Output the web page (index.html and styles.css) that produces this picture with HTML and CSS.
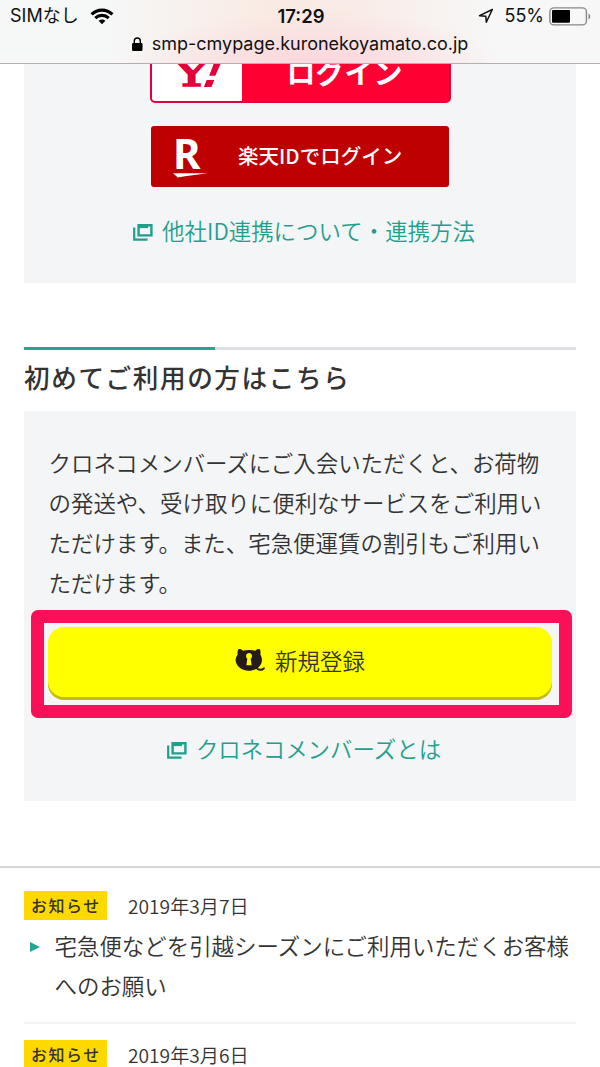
FILE: index.html
```html
<!DOCTYPE html>
<html lang="ja">
<head>
<meta charset="UTF-8">
<meta name="viewport" content="width=device-width, initial-scale=1.0">
<title>クロネコメンバーズ</title>
<link rel="stylesheet" href="styles.css">
</head>
<body>
    <!-- Status bar -->
    <header>
        <div class="status">
            <div class="carrier">
                <span>SIMなし</span>
                <svg width="24" height="17" viewBox="0 0 24 17" fill="none" stroke="#000" stroke-width="3.2">
                    <path d="M1.6 6.4C7.4.7 16.6.7 22.4 6.4"/>
                    <path d="M5.3 10.1c3.8-3.6 9.6-3.6 13.4 0"/>
                    <path d="M12 16.2l-3.4-3.4c1.9-1.7 4.9-1.7 6.8 0z" fill="#000" stroke="none"/>
                </svg>
            </div>
            <div class="clock">17:29</div>
            <div class="power">
                <svg width="16" height="16" viewBox="0 0 16 16" fill="none" stroke="#111" stroke-width="1.5" stroke-linejoin="round">
                    <path d="M14.3 1.5L1.5 7.7l6.3.5.5 6.1z"/>
                </svg>
                <span>55%</span>
                <svg class="battery" width="43" height="19" viewBox="0 0 43 19">
                    <rect x=".9" y=".9" width="36.5" height="17" rx="4" fill="none" stroke="#888" stroke-width="1.4"/>
                    <rect x="3" y="3" width="18" height="12.8" rx="1" fill="#000"/>
                    <path d="M39.5 6.5c2.3 1 2.3 5 0 6z" fill="#888"/>
                </svg>
            </div>
        </div>
        <div class="address">
            <svg width="11" height="14" viewBox="0 0 11 14">
                <rect x="0" y="6" width="10.5" height="8" rx="1.2" fill="#000"/>
                <path d="M2.3 6.5V4c0-4 6-4 6 0v2.5" fill="none" stroke="#000" stroke-width="1.4"/>
            </svg>
            <span>smp-cmypage.kuronekoyamato.co.jp</span>
        </div>
    </header>

    <main>
        <!-- Login with other IDs -->
        <section class="panel login">
            <a class="yahoo">
                <span class="yahoo-mark"><b>Y</b><i>!</i></span>
                <span class="yahoo-text">ログイン</span>
            </a>
            <a class="rakuten">
                <span class="rakuten-mark">
                    <b>R</b>
                    <svg width="36" height="6" viewBox="0 0 36 6"><path d="M0 1.2h34.5C25 3 14 3.2 4.8 5.6z" fill="#fff"/></svg>
                </span>
                <span class="rakuten-text">楽天IDでログイン</span>
            </a>
            <a class="link">
                <svg width="20" height="18" viewBox="0 0 20 18" fill="none" stroke="#1fa08d">
                    <path d="M1.2 4.5v12.2h13.300" stroke-width="2.2"/>
                    <path d="M5.6 2.2h12.8v10.2H5.6z" stroke-width="2.4"/>
                    <path d="M5 3.2h10" stroke-width="3.8"/>
                </svg>
                <span>他社ID連携について・連携方法</span>
            </a>
        </section>

        <!-- New members -->
        <h2>初めてご利用の方はこちら</h2>
        <section class="panel join">
            <p>クロネコメンバーズにご入会いただくと、お荷物の発送や、受け取りに便利なサービスをご利用いただけます。また、宅急便運賃の割引もご利用いただけます。</p>
            <div class="highlight">
                <a class="register">
                    <svg width="30" height="24" viewBox="0 0 30 23" preserveAspectRatio="none">
                        <path d="M3.3 1.3C4.4.4 6.4.9 8 2.6c4-.9 8.500-.9 12.300 0C21.900.9 23.900.5 24.900 1.300c.8 1.700.7 3.600.5 5.200 2.500 4 2.100 8.500-1.800 11.900C18 23.100 9 23 4 18.300.1 14.700-.4 10.300 2.600 6.400 2.400 4.600 2.600 2.700 3.300 1.300z" fill="#251b18"/>
                        <path d="M21.5 19c2 2.3 5.5 2.6 7.3.5" fill="none" stroke="#251b18" stroke-width="2" stroke-linecap="round"/>
                        <path d="M12.300 10.2a3 3 0 1 1 3.4 0l.9 6.3h-5.2z" fill="#ff0"/>
                    </svg>
                    <span>新規登録</span>
                </a>
            </div>
            <a class="link">
                <svg width="20" height="18" viewBox="0 0 20 18" fill="none" stroke="#1fa08d">
                    <path d="M1.2 4.5v12.2h13.300" stroke-width="2.2"/>
                    <path d="M5.6 2.2h12.8v10.2H5.6z" stroke-width="2.4"/>
                    <path d="M5 3.2h10" stroke-width="3.8"/>
                </svg>
                <span>クロネコメンバーズとは</span>
            </a>
        </section>

        <!-- News -->
        <ul class="news">
            <li>
                <div class="meta"><span class="tag">お知らせ</span><time>2019年3月7日</time></div>
                <a class="title">宅急便などを引越シーズンにご利用いただくお客様へのお願い</a>
            </li>
            <li>
                <div class="meta"><span class="tag">お知らせ</span><time>2019年3月6日</time></div>
            </li>
        </ul>
    </main>
</body>
</html>
```
FILE: styles.css
```css
* {
    box-sizing: border-box;
}

body {
    margin: 0;
    height: 1067px;
    overflow: hidden;
    display: flex;
    flex-direction: column;
    background-color: #fff;
    color: #333;
    font-family: 'Noto Sans CJK JP', sans-serif;
    font-size: 22.45px;
    font-weight: 350;
    line-height: 40px;
}

header {
    flex: none;
    height: 64px;
    border-bottom: 1px solid #b5adaf;
    background: radial-gradient(ellipse 190px 60px at 315px 70px, #fad5dc, rgba(250, 213, 220, 0)), linear-gradient(90deg, #f6f7f7 18%, #f9ebe3 45%, #f9ebe6 58%, #f7f7f7 82%);
    color: #111;
    font-family: Inter, 'Noto Sans CJK JP', sans-serif;
    font-weight: 400;
}

.status {
    display: grid;
    grid-template-columns: 1fr auto 1fr;
    align-items: center;
    height: 32px;
    padding: 0 8px 0 10px;
    font-size: 18px;
    line-height: 32px;
}

.carrier, .power {
    display: flex;
    align-items: center;
}

.carrier {
    gap: 11px;
}

.clock {
    font-size: 18.5px;
    font-weight: 600;
}

.power {
    justify-content: flex-end;
    gap: 10px;
}

.battery {
    margin-left: -5px;
}

.address {
    display: flex;
    justify-content: center;
    align-items: center;
    gap: 9px;
    height: 23px;
    font-size: 18px;
}

/* Content below the browser bar */
main {
    flex: 1;
    min-height: 0;
    overflow: hidden;
}

.panel {
    margin: 0 24px;
    background-color: #f3f5f7;
}

.login {
    height: 219px;
    display: flex;
    flex-direction: column;
    align-items: center;
}

.yahoo {
    display: flex;
    flex: none;
    width: 301px;
    height: 62px;
    margin-top: -23px;
    border: 2px solid #e4003a;
    border-radius: 5px;
    background-color: #ff0033;
    overflow: hidden;
}

.yahoo-mark {
    display: flex;
    width: 90px;
    background-color: #fff;
    color: #e4003a;
    padding-left: 27px;
}

.yahoo-mark b {
    font-family: 'DejaVu Serif', serif;
    font-size: 38px;
    font-weight: 400;
    line-height: 60px;
    transform: scaleX(1.5);
    -webkit-text-stroke: 1.5px #e4003a;
}

.yahoo-mark i {
    font-family: 'Liberation Sans', sans-serif;
    font-size: 54px;
    font-weight: 700;
    line-height: 50px;
    margin-left: 1px;
    transform: skewX(-12deg);
}

.yahoo-text {
    flex: 1;
    color: #fff;
    font-size: 29px;
    font-weight: 700;
    line-height: 56px;
    padding-left: 45px;
}

.rakuten {
    display: flex;
    flex: none;
    align-items: center;
    width: 298px;
    height: 61px;
    margin-top: 23px;
    border-radius: 3px;
    background-color: #bf0000;
    color: #fff;
}

.rakuten-mark {
    display: flex;
    flex-direction: column;
    width: 36px;
    margin: 1px 0 0 22px;
}

.rakuten-mark b {
    font-family: 'Noto Sans', sans-serif;
    font-size: 42px;
    font-weight: 700;
    line-height: 31px;
    padding-bottom: 4px;
}

.rakuten-text {
    margin: -3px 0 0 29px;
    font-size: 20.5px;
    font-weight: 500;
}

.link {
    display: flex;
    justify-content: center;
    align-items: center;
    gap: 9px;
    padding-left: 8px;
    color: #1fa08d;
}

.link svg {
    margin-top: 3px;
}

.login .link {
    margin-top: 23px;
}

h2 {
    margin: 64px 24px 16px;
    padding-top: 8px;
    border-top: 3px solid;
    border-image: linear-gradient(90deg, #23a68f 192px, #dfe0e6 192px) 3;
    font-size: 25.6px;
    font-weight: 500;
    letter-spacing: 1.6px;
    line-height: 37px;
}

.join {
    height: 390px;
    padding-top: 31px;
}

.join p {
    margin: 0 24px;
    padding-left: 0.5px;
}

.highlight {
    width: 541px;
    height: 108px;
    margin: 8px 0 0 7px;
    padding: 4px;
    border: 13px solid #fb0f59;
    border-radius: 7px;
}

.register {
    display: flex;
    justify-content: center;
    align-items: center;
    gap: 10px;
    width: 504px;
    height: 73px;
    padding-bottom: 8px;
    border-radius: 16px;
    background-color: #ff0;
    box-shadow: inset 0 -3px 0 #c2bd13;
}

.join .link {
    margin-top: 10px;
}

.news {
    margin: 65px 0 0;
    padding: 23px 24px 0;
    border-top: 2px solid #d5d5d5;
    list-style: none;
}

.news li {
    margin-bottom: 16px;
    border-bottom: 2px solid #f3f4f5;
    padding-bottom: 17px;
}

.meta {
    display: flex;
    align-items: center;
    gap: 21px;
    height: 29px;
    margin-bottom: 5px;
    font-size: 19.2px;
}

.tag {
    width: 83px;
    height: 29px;
    padding-left: 7px;
    background-color: #fdd900;
    font-size: 16px;
    font-weight: 500;
    letter-spacing: 1.5px;
    line-height: 29px;
}

.title {
    display: block;
    position: relative;
    margin-right: -10px;
    padding-left: 30.5px;
}

.title::before {
    content: "";
    position: absolute;
    left: 6px;
    top: 17px;
    border-left: 10px solid #23a68f;
    border-top: 5.5px solid transparent;
    border-bottom: 5.5px solid transparent;
}
```
